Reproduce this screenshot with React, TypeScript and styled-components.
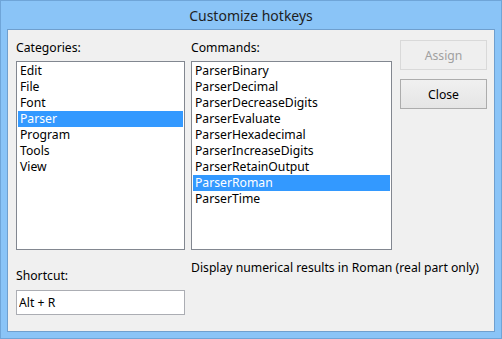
import React from 'react';
import styled, { createGlobalStyle } from 'styled-components';

const GlobalStyle = createGlobalStyle`
	html, body {
		margin: 0;
		padding: 0;
		background: #ffffff;
	}
	body {
		font-family: 'Segoe UI', 'Noto Sans', 'Liberation Sans', sans-serif;
		font-size: 12.2px;
		color: #000000;
	}
`;

const Frame = styled.div`
	width: 502px;
	height: 339px;
	box-sizing: border-box;
	border: 1px solid #6fa5d8;
	background: #8ac4f7;
	display: flex;
	flex-direction: column;
	padding: 0 6px 6px 6px;
`;

const TitleBar = styled.div`
	height: 28px;
	display: flex;
	align-items: center;
	justify-content: center;
	font-size: 14px;
	color: #1e1e1e;
	padding-top: 1px;
	box-sizing: border-box;
`;

const Client = styled.div`
	flex: 1;
	border: 1px solid #6f9fce;
	background: #f0f0f0;
	display: flex;
	padding: 10px 7px 0 8px;
`;

const Column = styled.div<{ width: number; gap?: number }>`
	width: ${(props) => props.width}px;
	margin-right: ${(props) => props.gap ?? 0}px;
	display: flex;
	flex-direction: column;
`;

const Label = styled.div<{ top?: number }>`
	height: 16px;
	line-height: 16px;
	margin-top: ${(props) => props.top ?? 0}px;
	margin-bottom: 5px;
	white-space: nowrap;
`;

const ListBox = styled.div`
	height: 189px;
	box-sizing: border-box;
	border: 1px solid #828790;
	background: #ffffff;
	padding: 1px;
`;

const Item = styled.div<{ selected?: boolean }>`
	height: 16px;
	line-height: 16px;
	padding-left: 2px;
	white-space: nowrap;
	background: ${(props) => (props.selected ? '#3399ff' : 'transparent')};
	color: ${(props) => (props.selected ? '#ffffff' : '#000000')};
`;

const Description = styled.div`
	margin-top: 10px;
	line-height: 16px;
	white-space: nowrap;
`;

const ShortcutInput = styled.input.attrs({
	readOnly: true
})`
	height: 25px;
	box-sizing: border-box;
	border: 1px solid #abadb3;
	background: #ffffff;
	padding: 0 0 0 2px;
	margin: 1px 0 0 0;
	font-family: inherit;
	font-size: 12.2px;
	color: #000000;
	outline: none;
`;

const Button = styled.button`
	width: 87px;
	height: 30px;
	margin-bottom: 9px;
	box-sizing: border-box;
	border: 1px solid #acacac;
	background: linear-gradient(#f0f0f0, #e5e5e5);
	font-family: inherit;
	font-size: 12.2px;
	color: #000000;
	padding: 0;
	&:disabled {
		border-color: #d9d9d9;
		background: #efefef;
		color: #a0a0a0;
	}
`;

const categories = ['Edit', 'File', 'Font', 'Parser', 'Program', 'Tools', 'View'];

const commands = [
	'ParserBinary',
	'ParserDecimal',
	'ParserDecreaseDigits',
	'ParserEvaluate',
	'ParserHexadecimal',
	'ParserIncreaseDigits',
	'ParserRetainOutput',
	'ParserRoman',
	'ParserTime'
];

export default function App() {
	return (
		<>
			<GlobalStyle />
			<Frame>
				<TitleBar>Customize hotkeys</TitleBar>
				<Client>
					<Column width={169} gap={6}>
						<Label>Categories:</Label>
						<ListBox>
							{categories.map((c) => (
								<Item key={c} selected={c === 'Parser'}>
									{c}
								</Item>
							))}
						</ListBox>
						<Label top={18}>Shortcut:</Label>
						<ShortcutInput value="Alt + R" />
					</Column>
					<Column width={201} gap={8}>
						<Label>Commands:</Label>
						<ListBox>
							{commands.map((c) => (
								<Item key={c} selected={c === 'ParserRoman'}>
									{c}
								</Item>
							))}
						</ListBox>
						<Description>Display numerical results in Roman (real part only)</Description>
					</Column>
					<Column width={87}>
						<Button disabled>Assign</Button>
						<Button>Close</Button>
					</Column>
				</Client>
			</Frame>
		</>
	);
}
